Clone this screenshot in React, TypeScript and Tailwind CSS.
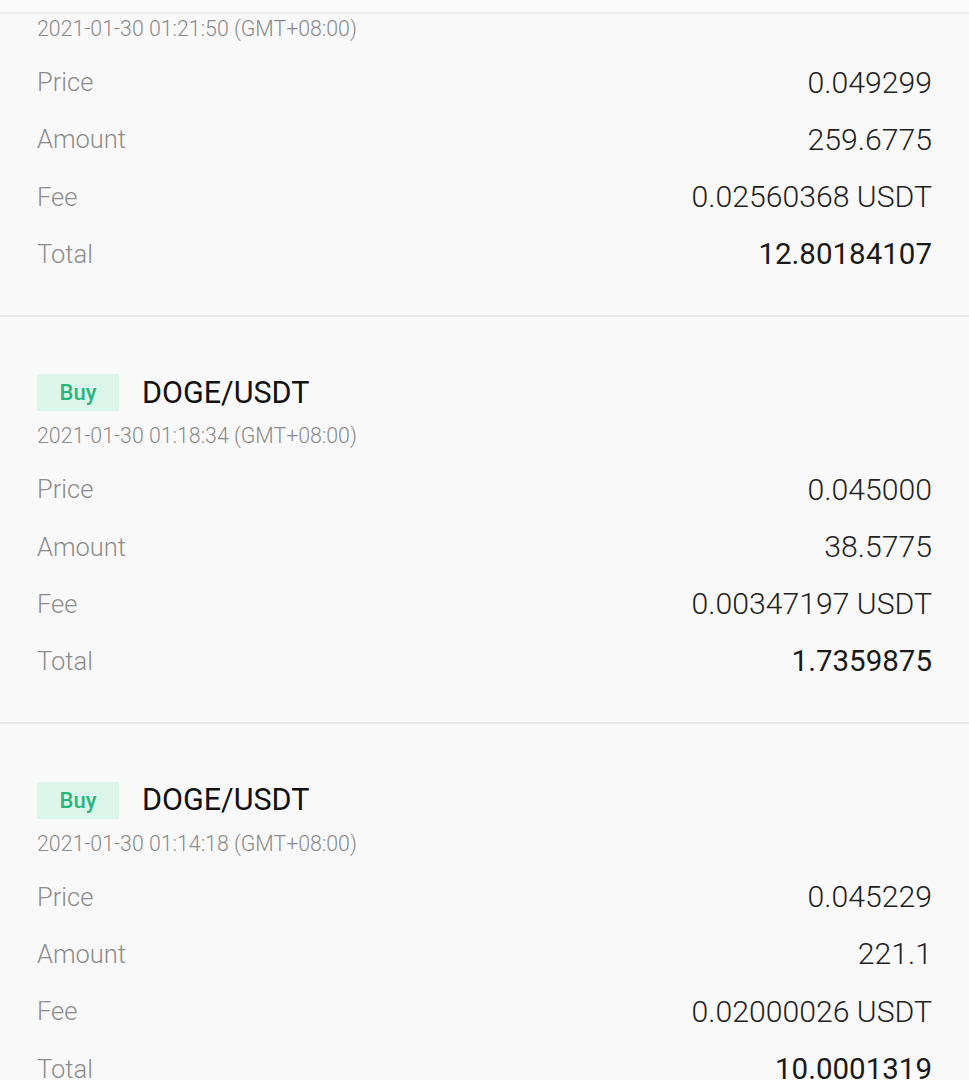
import React from "react";

type Trade = {
  title?: string;
  time: string;
  price: string;
  amount: string;
  fee: string;
  total: string;
};

const trades: Trade[] = [
  {
    time: "2021-01-30 01:21:50 (GMT+08:00)",
    price: "0.049299",
    amount: "259.6775",
    fee: "0.02560368 USDT",
    total: "12.80184107",
  },
  {
    title: "DOGE/USDT",
    time: "2021-01-30 01:18:34 (GMT+08:00)",
    price: "0.045000",
    amount: "38.5775",
    fee: "0.00347197 USDT",
    total: "1.7359875",
  },
  {
    title: "DOGE/USDT",
    time: "2021-01-30 01:14:18 (GMT+08:00)",
    price: "0.045229",
    amount: "221.1",
    fee: "0.02000026 USDT",
    total: "10.0001319",
  },
];

function Row({ label, value, bold }: { label: string; value: string; bold?: boolean }) {
  return (
    <div className="flex h-[57.33px] items-center justify-between">
      <span className="text-[25.5px] font-light text-[#8c8c8c]">{label}</span>
      <span
        className={
          bold
            ? "text-[29.5px] font-normal text-[#1a1a1a]"
            : "text-[30.2px] font-light text-[#222222]"
        }
      >
        {value}
      </span>
    </div>
  );
}

function Section({ t, first }: { t: Trade; first?: boolean }) {
  return (
    <div className={first ? "px-[37px] pt-[1px] pb-[32px]" : "px-[37px] pt-[57.5px] pb-[32px]"}>
      {t.title && (
        <div className="flex h-[37px] items-center gap-[23px]">
          <span className="flex h-[37px] w-[82px] items-center justify-center bg-[#dcf5eb] text-[22px] font-medium text-[#2bb57c]">
            Buy
          </span>
          <span className="text-[30.5px] font-normal leading-none text-[#111111]">{t.title}</span>
        </div>
      )}
      <div
        className={
          (t.title ? "mt-[11px] " : "") +
          "h-[28px] whitespace-nowrap text-[21.3px] leading-[28px] font-light text-[#8a8a8a]"
        }
      >
        {t.time}
      </div>
      <div className="mt-[10.5px]">
        <Row label="Price" value={t.price} />
        <Row label="Amount" value={t.amount} />
        <Row label="Fee" value={t.fee} />
        <Row label="Total" value={t.total} bold />
      </div>
    </div>
  );
}

export default function App() {
  return (
    <div
      className="h-[1080px] w-[969px] overflow-hidden bg-[#f9f9f9]"
      style={{ fontFamily: "Roboto, 'Noto Sans', sans-serif" }}
    >
      <div className="h-[12px] bg-[#fafafa]" />
      <div className="h-[2px] bg-[#ececec]" />
      {trades.map((t, i) => (
        <div key={i}>
          {i > 0 && <div className="h-[2px] bg-[#e9e9e9]" />}
          <Section t={t} first={i === 0} />
        </div>
      ))}
    </div>
  );
}
